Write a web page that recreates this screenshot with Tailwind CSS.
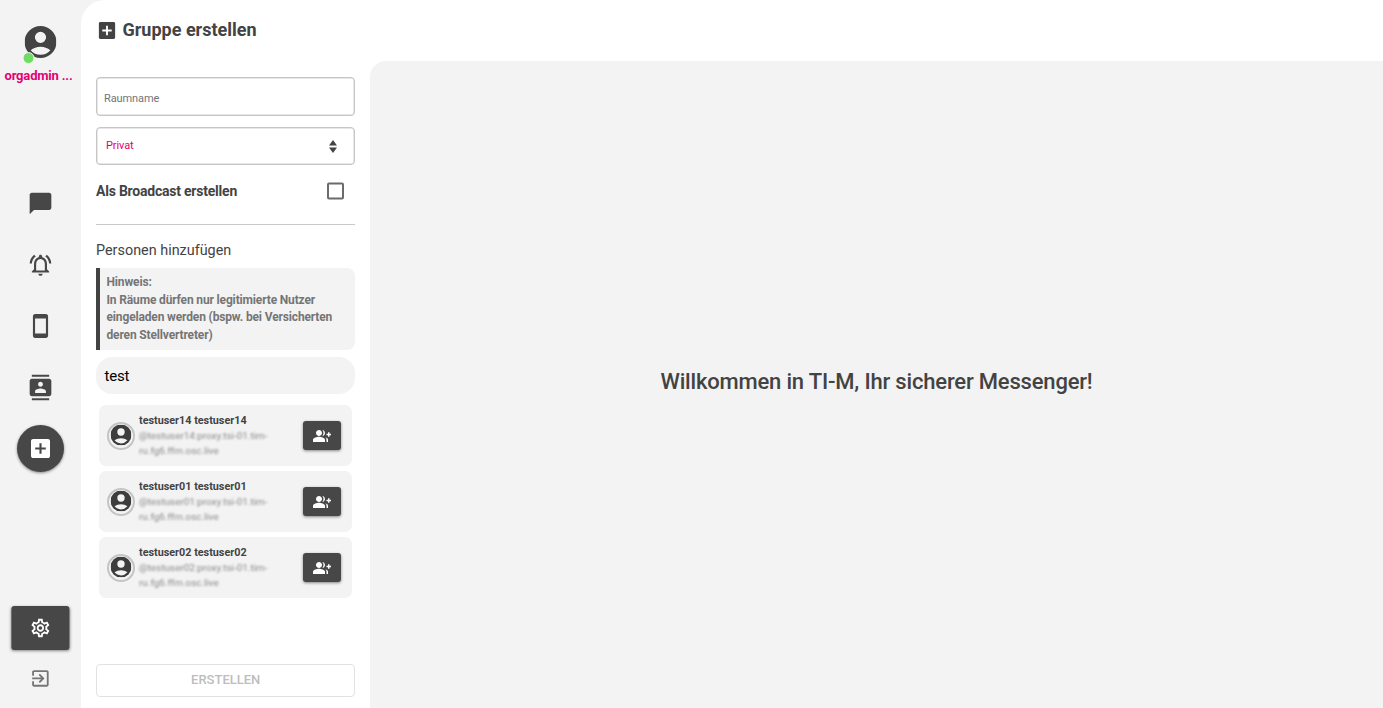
<!DOCTYPE html>
<html lang="de">
<head>
<meta charset="utf-8">
<title>Gruppe erstellen</title>
<script src="https://cdn.jsdelivr.net/npm/@tailwindcss/browser@4"></script>
</head>
<body class="flex h-[708px] w-[1383px] overflow-hidden bg-[#f3f3f3] font-['Roboto',sans-serif] text-[#434343]">
<svg class="hidden">
  <symbol id="account" viewBox="2 2 20 20"><path fill-rule="evenodd" d="M12 2a10 10 0 1 0 0 20 10 10 0 0 0 0-20zM12 5.600a3.500 3.500 0 1 1 0 7 3.500 3.500 0 0 1 0-7zM5.850 17.100q1.275-.975 2.850-1.540T12 15q1.730 0 3.300.56t2.850 1.540A8 8 0 0 1 12 20a8 8 0 0 1-6.150-2.900z"/></symbol>
  <symbol id="addbox" viewBox="3 3 18 18"><path d="M19 3H5c-1.11 0-2 .9-2 2v14c0 1.1.89 2 2 2h14c1.1 0 2-.9 2-2V5c0-1.1-.9-2-2-2zm-2 10h-4v4h-2v-4H7v-2h4V7h2v4h4v2z"/></symbol>
  <symbol id="groupadd" viewBox="0 0 24 24"><path d="M22 9V7h-2v2h-2v2h2v2h2v-2h2V9zM8 12c2.21 0 4-1.79 4-4s-1.790-4-4-4-4 1.790-4 4 1.790 4 4 4zm0 1c-2.670 0-8 1.340-8 4v3h16v-3c0-2.660-5.330-4-8-4zm4.510-8.950C13.430 5.110 14 6.490 14 8s-.570 2.890-1.490 3.950C14.470 11.700 16 10.040 16 8s-1.530-3.700-3.490-3.950zm4.020 9.780C17.420 14.660 18 15.700 18 17v3h2v-3c0-1.450-1.590-2.510-3.470-3.170z"/></symbol>
</svg>

<nav class="flex h-full w-[81px] shrink-0 flex-col items-center pr-px pt-[26px]">
  <div class="relative size-8 translate-x-[0.5px]">
    <svg class="size-8 fill-[#434343]"><use href="#account"/></svg>
    <span class="absolute -left-[2px] top-[26px] size-[12px] rounded-full border border-[#f3f3f3] bg-[#6fdc65]"></span>
  </div>
  <span class="mt-[9px] w-[80px] pl-[4.500px] text-[13px] font-bold leading-[17px] tracking-[-0.180px] text-[#e20074]">orgadmin ...</span>
  <svg class="mt-[106px] size-[26px] shrink-0 translate-x-[0.5px] translate-y-[0.5px] fill-[#474747]" viewBox="0 0 24 24"><path d="M20 2H4c-1.100 0-2 .9-2 2v18l4-4h14c1.100 0 2-.9 2-2V4c0-1.100-.9-2-2-2z"/></svg>
  <svg class="mt-[36px] size-[26px] shrink-0 translate-x-[0.5px] fill-[#474747]" viewBox="0 0 24 24"><path d="M12 22c1.100 0 2-.9 2-2h-4c0 1.100.9 2 2 2zm6-6v-5c0-3.070-1.630-5.640-4.500-6.320V4c0-.830-.670-1.500-1.500-1.500s-1.500.670-1.500 1.500v.680C7.640 5.360 6 7.920 6 11v5l-2 2v1h16v-1l-2-2zm-2 1H8v-6c0-2.480 1.510-4.500 4-4.500s4 2.020 4 4.500v6zM7.580 4.080L6.150 2.650C3.750 4.480 2.170 7.300 2.030 10.500h2c.15-2.650 1.510-4.970 3.550-6.420zm12.390 6.420h2c-.15-3.200-1.730-6.020-4.120-7.850l-1.420 1.430c2.020 1.450 3.390 3.770 3.540 6.420z"/></svg>
  <svg class="mt-[35px] size-[26px] shrink-0 translate-x-[0.5px] fill-[#474747]" viewBox="0 0 24 24"><path d="M17 1.010 7 1c-1.100 0-2 .9-2 2v18c0 1.100.9 2 2 2h10c1.100 0 2-.9 2-2V3c0-1.100-.9-1.990-2-1.990zM17 19H7V5h10v14z"/></svg>
  <svg class="mt-[35px] size-[26px] shrink-0 translate-x-[0.5px] translate-y-[0.5px] fill-[#474747]" viewBox="0 0 24 24"><path d="M20 0H4v2h16V0zM4 24h16v-2H4v2zM20 4H4c-1.100 0-2 .9-2 2v12c0 1.100.9 2 2 2h16c1.100 0 2-.9 2-2V6c0-1.100-.9-2-2-2zm-8 2.750c1.240 0 2.250 1.010 2.250 2.250s-1.010 2.250-2.250 2.250S9.750 10.240 9.750 9 10.760 6.750 12 6.750zM17 17H7v-1.500c0-1.670 3.330-2.500 5-2.500s5 .830 5 2.500V17z"/></svg>
  <div class="ml-px mt-[25px] flex size-[47px] shrink-0 items-center justify-center rounded-full bg-[#474747] shadow-[0_1px_3px_rgba(0,0,0,0.45)]">
    <svg class="size-[19px] fill-white"><use href="#addbox"/></svg>
  </div>
  <div class="mt-[134px] flex h-[44px] w-[58px] shrink-0 translate-x-[0.4px] items-center justify-center rounded-[3px] bg-[#474747] shadow-[0_1px_3px_rgba(0,0,0,0.45)]">
    <svg class="size-[22px] fill-white" viewBox="0 0 24 24"><path d="M19.430 12.980c.04-.32.07-.64.07-.98 0-.34-.03-.66-.07-.98l2.110-1.650c.19-.15.24-.42.12-.64l-2-3.460c-.09-.16-.26-.25-.44-.25-.06 0-.12.01-.17.030l-2.490 1c-.52-.4-1.080-.73-1.690-.98l-.38-2.650C14.460 2.180 14.250 2 14 2h-4c-.25 0-.46.18-.49.42l-.38 2.650c-.61.25-1.170.59-1.690.98l-2.490-1c-.06-.02-.12-.03-.18-.03-.17 0-.34.09-.43.25l-2 3.460c-.13.22-.07.49.12.64l2.110 1.650c-.04.32-.07.65-.07.98 0 .33.03.66.07.98l-2.110 1.650c-.19.15-.24.42-.12.64l2 3.460c.09.16.26.25.44.25.06 0 .12-.01.17-.03l2.490-1c.52.4 1.080.73 1.690.98l.38 2.650c.03.24.24.42.49.42h4c.25 0 .46-.18.49-.42l.38-2.650c.61-.25 1.170-.59 1.690-.98l2.490 1c.06.02.12.03.18.03.17 0 .34-.09.43-.25l2-3.460c.12-.22.07-.49-.12-.64l-2.110-1.650zm-1.980-1.710c.04.31.05.52.05.73 0 .21-.02.43-.05.73l-.14 1.130.89.7 1.080.84-.7 1.210-1.270-.51-1.040-.42-.9.68c-.43.32-.84.56-1.250.73l-1.060.43-.16 1.130-.2 1.350h-1.400l-.19-1.350-.16-1.130-1.060-.43c-.43-.18-.83-.41-1.230-.71l-.91-.7-1.060.43-1.270.51-.7-1.210 1.080-.84.89-.7-.14-1.130c-.03-.31-.05-.54-.05-.74s.02-.43.05-.73l.14-1.130-.89-.7-1.080-.84.7-1.210 1.270.51 1.040.42.9-.68c.43-.32.84-.56 1.250-.73l1.060-.43.16-1.130.2-1.350h1.390l.19 1.350.16 1.130 1.060.43c.43.18.83.41 1.230.71l.91.7 1.060-.43 1.270-.51.7 1.210-1.070.85-.89.7.14 1.130zM12 8c-2.210 0-4 1.790-4 4s1.790 4 4 4 4-1.790 4-4-1.790-4-4-4zm0 6c-1.100 0-2-.9-2-2s.9-2 2-2 2 .9 2 2-.9 2-2 2z"/></svg>
  </div>
  <svg class="mt-[17px] size-[22px] shrink-0 translate-x-[0.4px] translate-y-[0.4px] fill-[#757575]" viewBox="0 0 24 24"><path d="M10.090 15.590 11.500 17l5-5-5-5-1.410 1.410L12.670 11H3v2h9.670l-2.580 2.590zM19 3H5c-1.110 0-2 .9-2 2v4h2V5h14v14H5v-4H3v4c0 1.100.89 2 2 2h14c1.100 0 2-.9 2-2V5c0-1.100-.9-2-2-2z"/></svg>
</nav>

<div class="flex h-full min-w-0 flex-1 flex-col rounded-tl-[24px] bg-white">
  <header class="flex h-[61px] shrink-0 items-center pb-px pl-[17.500px]">
    <svg class="size-[17px] -translate-x-[0.5px] fill-[#434343]"><use href="#addbox"/></svg>
    <h1 class="ml-[7px] text-[18px] font-bold leading-6">Gruppe erstellen</h1>
  </header>
  <div class="flex min-h-0 flex-1">
    <section class="flex w-[289px] shrink-0 flex-col pl-[15px] pr-[14.600px] pt-[16px]">
      <div class="flex h-[39px] shrink-0 items-center rounded-[4px] border border-[#c6c6c6] px-[7px] pt-[4px] text-[11px] tracking-[-0.100px] text-[#757575] shadow-[inset_0_0_0_0.5px_#d0d0d0]"><span class="translate-y-[0.5px]">Raumname</span></div>
      <div class="mt-[11px] flex h-[38px] shrink-0 items-center justify-between rounded-[4px] border border-[#c6c6c6] pl-[9px] pr-[17px] text-[11px] tracking-[-0.100px] text-[#e20074] shadow-[inset_0_0_0_0.5px_#d0d0d0]">Privat
        <svg class="h-[13px] w-[8px] fill-[#434343]" viewBox="0 0 8 13"><path d="M4 0l4 5.500H0zM4 13L0 7.500h8z"/></svg>
      </div>
      <div class="mt-[17px] flex h-[18px] shrink-0 items-center justify-between pr-[11px] text-[14px] font-bold tracking-[-0.220px]">Als Broadcast erstellen
        <span class="size-[17px] -translate-y-[0.5px] rounded-[2px] border-2 border-[#6b6b6b]"></span>
      </div>
      <div class="mt-[24px] h-px shrink-0 bg-[#c9c9c9]"></div>
      <h2 class="mt-[16px] text-[14.400px] leading-[20px]">Personen hinzufügen</h2>
      <div class="mt-[7px] h-[82px] shrink-0 whitespace-nowrap rounded-r-[8px] border-l-4 border-[#434343] bg-[#f3f3f3] pl-[6.500px] pt-[6px] text-[12px] font-bold leading-[17.600px] tracking-[-0.150px] text-[#757575]">Hinweis:<br>In Räume dürfen nur legitimierte Nutzer<br>eingeladen werden (bspw. bei Versicherten<br>deren Stellvertreter)</div>
      <div class="mt-[7px] flex h-[37px] shrink-0 items-center rounded-[16px] bg-[#f3f3f3] pl-[8.500px] pt-[2px] text-[15px] tracking-[-0.200px] text-black">test</div>
      <div class="mt-[11px] flex flex-col gap-[5px] pl-[3px] pr-[3.400px]">
        <div class="flex h-[61px] items-center rounded-[7px] bg-[#f3f3f3] pl-[8px] pr-[11px]">
          <span class="flex size-[28px] shrink-0 items-center justify-center rounded-full border-2 border-[#c4c4c4]"><svg class="size-[21px] -translate-x-[0.5px] -translate-y-[0.5px] fill-[#3d3d3d]"><use href="#account"/></svg></span>
          <div class="ml-[4px] flex-1 whitespace-nowrap text-[10.800px] leading-[15px]"><p class="font-bold">testuser14 testuser14</p><p class="text-[9.900px] text-[#8a8a8a] blur-[1.200px]">@testuser14:proxy.tsi-01.tim-<br>ru.fg6.ffm.osc.live</p></div>
          <span class="flex h-[29px] w-[38px] items-center justify-center rounded-[3px] bg-[#474747] shadow-[0_1px_3px_rgba(0,0,0,0.45)]"><svg class="size-[18px] fill-white"><use href="#groupadd"/></svg></span>
        </div>
        <div class="flex h-[61px] items-center rounded-[7px] bg-[#f3f3f3] pl-[8px] pr-[11px]">
          <span class="flex size-[28px] shrink-0 items-center justify-center rounded-full border-2 border-[#c4c4c4]"><svg class="size-[21px] -translate-x-[0.5px] -translate-y-[0.5px] fill-[#3d3d3d]"><use href="#account"/></svg></span>
          <div class="ml-[4px] flex-1 whitespace-nowrap text-[10.800px] leading-[15px]"><p class="font-bold">testuser01 testuser01</p><p class="text-[9.900px] text-[#8a8a8a] blur-[1.200px]">@testuser01:proxy.tsi-01.tim-<br>ru.fg6.ffm.osc.live</p></div>
          <span class="flex h-[29px] w-[38px] items-center justify-center rounded-[3px] bg-[#474747] shadow-[0_1px_3px_rgba(0,0,0,0.45)]"><svg class="size-[18px] fill-white"><use href="#groupadd"/></svg></span>
        </div>
        <div class="flex h-[61px] items-center rounded-[7px] bg-[#f3f3f3] pl-[8px] pr-[11px]">
          <span class="flex size-[28px] shrink-0 items-center justify-center rounded-full border-2 border-[#c4c4c4]"><svg class="size-[21px] -translate-x-[0.5px] -translate-y-[0.5px] fill-[#3d3d3d]"><use href="#account"/></svg></span>
          <div class="ml-[4px] flex-1 whitespace-nowrap text-[10.800px] leading-[15px]"><p class="font-bold">testuser02 testuser02</p><p class="text-[9.900px] text-[#8a8a8a] blur-[1.200px]">@testuser02:proxy.tsi-01.tim-<br>ru.fg6.ffm.osc.live</p></div>
          <span class="flex h-[29px] w-[38px] items-center justify-center rounded-[3px] bg-[#474747] shadow-[0_1px_3px_rgba(0,0,0,0.45)]"><svg class="size-[18px] fill-white"><use href="#groupadd"/></svg></span>
        </div>
      </div>
      <div class="mb-[11px] mt-auto flex h-[33px] shrink-0 items-center justify-center rounded-[4px] border border-[#e2e2e2] pb-px text-[13px] font-medium text-[#bdbdbd]">ERSTELLEN</div>
    </section>
    <main class="flex flex-1 items-center justify-center rounded-tl-[16px] bg-[#f3f3f3] pb-[5px]">
      <p class="text-[22px] font-medium leading-7 tracking-[-0.180px]">Willkommen in TI-M, Ihr sicherer Messenger!</p>
    </main>
  </div>
</div>
</body>
</html>
